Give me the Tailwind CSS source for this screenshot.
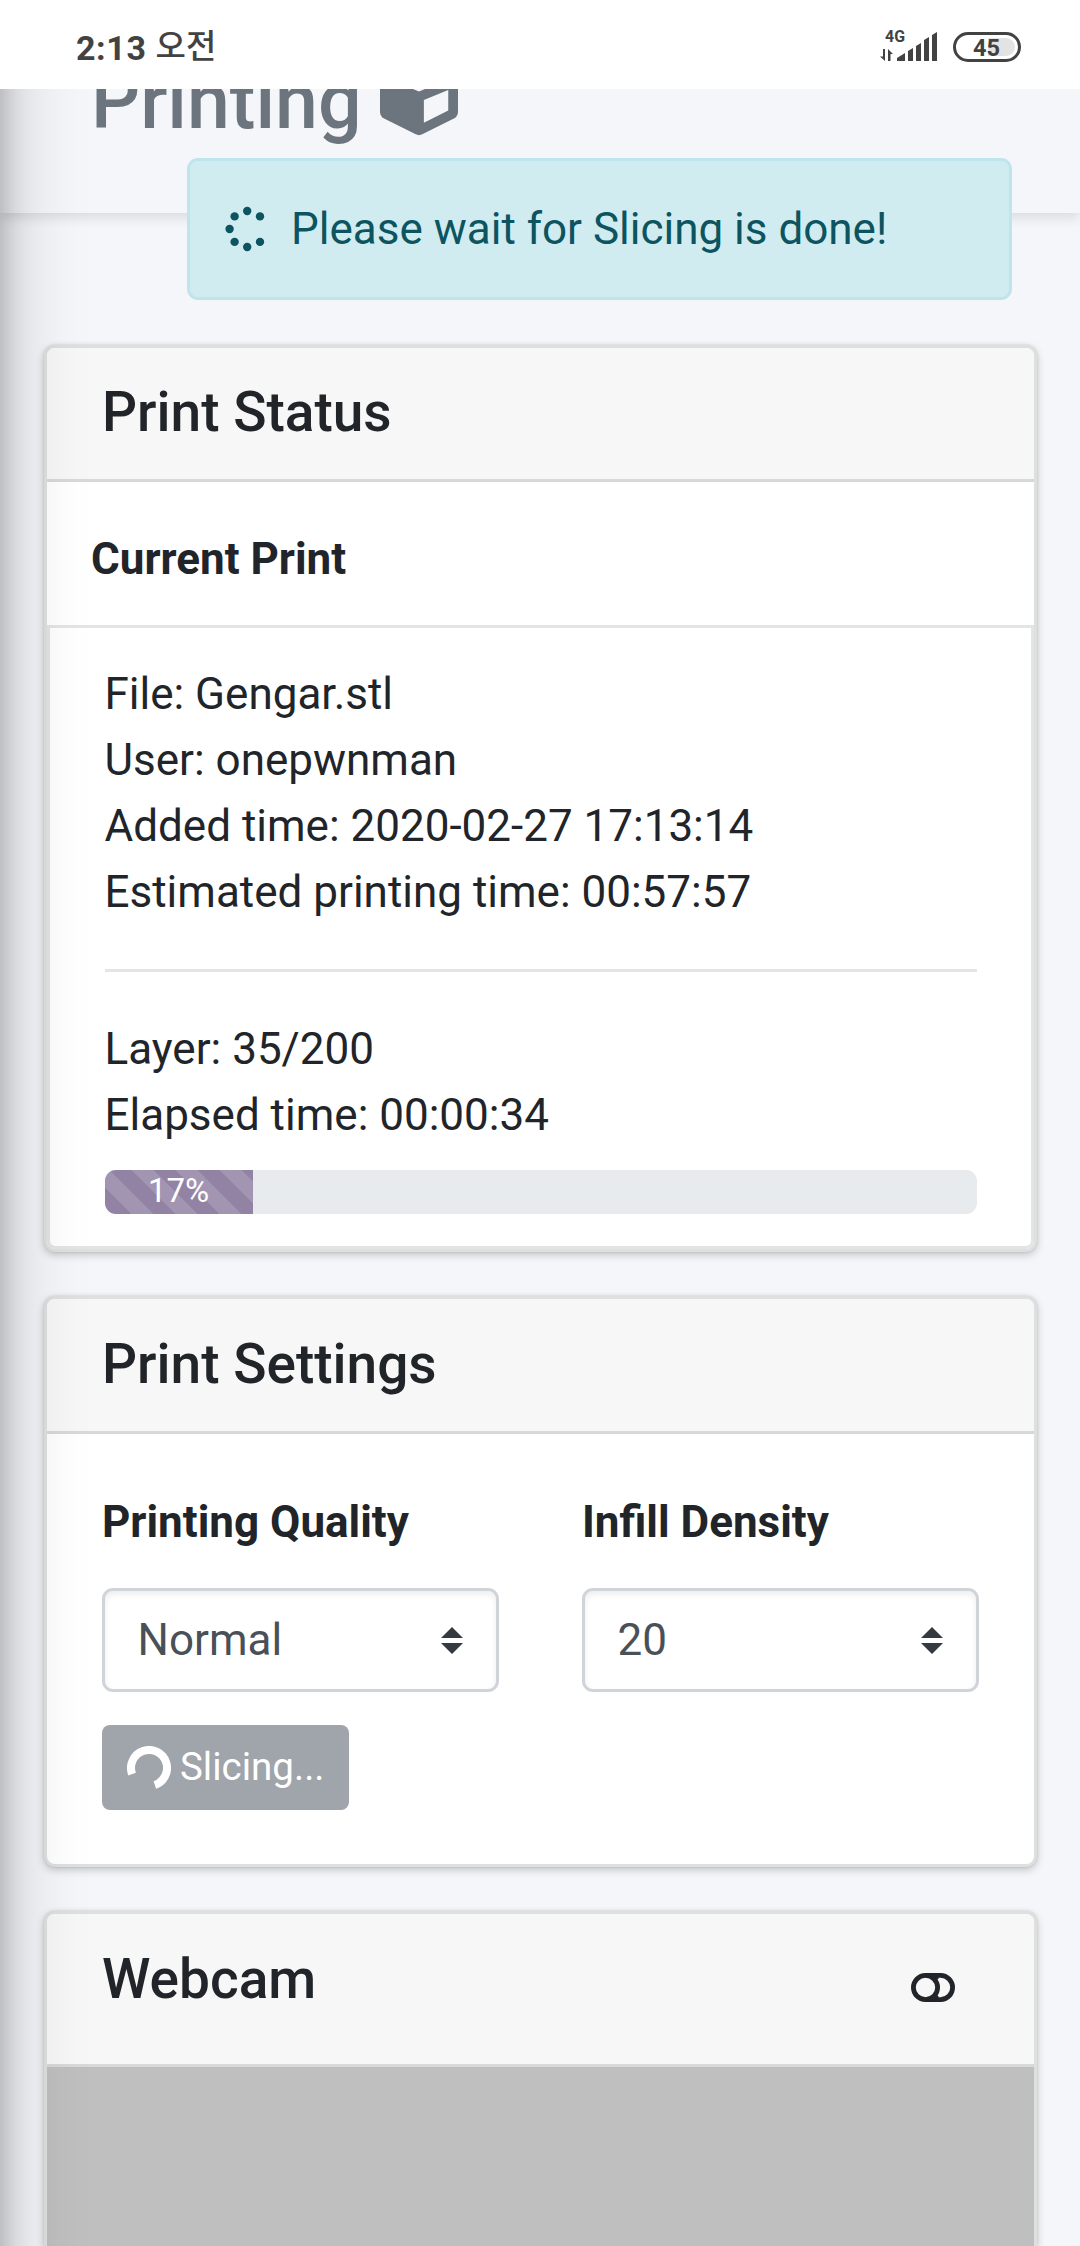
<!DOCTYPE html>
<html lang="ko">
<head>
<meta charset="utf-8">
<title>Printing</title>
<script src="https://cdn.jsdelivr.net/npm/@tailwindcss/browser@4"></script>
</head>
<body class="relative h-[2246px] w-[1080px] overflow-hidden bg-[#f4f6fa] font-['Roboto','Noto_Sans_CJK_KR',sans-serif] text-[44px] leading-[66px] text-[#212529]">

<!-- System status bar -->
<div class="relative z-30 flex h-[89px] items-start bg-white text-[#424242]">
  <div class="flex pt-[28px] pl-[76px] text-[34px] leading-[40px] font-bold whitespace-pre"><span class="tracking-[0.6px]">2:13 </span><span class="-mt-px text-[33px] font-medium">오전</span></div>
  <svg class="ml-auto h-[89px] w-[210px]" viewBox="870 0 210 89" fill="#424242">
    <text x="885" y="42" font-size="16.5" font-weight="700" textLength="20" lengthAdjust="spacingAndGlyphs">4G</text>
    <path d="M883 49h2v12l-5-4.500h3zM888 61V49l5 5h-2.500v7z"/>
    <path d="M897 61v-3l8-5v8zM908 61V51l5-3v13zM916 61V46l5-3v18zM924 61V40l5-3v24zM932 61V35l5-3v29z"/>
    <path d="M988 38h18a9 9 0 0 1 0 18h-18z" fill="#e3e3e3"/>
    <rect x="954.500" y="33.500" width="65" height="27" rx="13.500" fill="none" stroke="#424242" stroke-width="3"/>
    <text x="973" y="56" font-size="24" font-weight="700" textLength="27" lengthAdjust="spacingAndGlyphs">45</text>
  </svg>
</div>

<!-- Page header, scrolled partly under the status bar -->
<header class="flex h-[124px] items-end bg-[#f4f6fa] pb-[58px] pl-[91px] shadow-[0_5.5px_11px_rgba(0,0,0,0.1)]">
  <h1 class="flex items-end gap-[18px] text-[77px] leading-[92px] font-medium text-[#6c757d]">
    <span class="mb-[7px]">Printing</span>
    <svg class="mb-[19px] h-[78px] w-[78px]" viewBox="0 0 512 512" fill="currentColor"><path d="M239.100 6.300l-208 78c-18.700 7-31.100 25-31.100 45v225.100c0 18.200 10.300 34.800 26.500 42.900l208 104c13.500 6.800 29.400 6.800 42.900 0l208-104c16.300-8.100 26.500-24.800 26.500-42.900V129.300c0-20-12.400-37.900-31.100-44.900l-208-78C262 2.200 250 2.200 239.100 6.300zM256 68.400l192 72v1.100l-192 78-192-78v-1.100l192-72zm32 356V275.500l160-65v133.900l-160 80z"/></svg>
  </h1>
</header>

<!-- Floating alert -->
<div class="absolute top-[158px] left-[187px] z-20 flex h-[142px] w-[825px] items-center rounded-[11px] border-[3px] border-[#bee5eb] bg-[#d1ecf1] pl-[34px] text-[#0c5460]">
  <svg class="h-[46px] w-[46px]" viewBox="224 205.700 46 46" fill="currentColor">
    <circle cx="247.200" cy="210.700" r="4.200"/><circle cx="260" cy="216.100" r="4.200"/><circle cx="260" cy="241.600" r="4.200"/><circle cx="247.200" cy="246.700" r="4.200"/><circle cx="234.600" cy="241.600" r="4.200"/><circle cx="229.600" cy="228.700" r="4.200"/><circle cx="234.600" cy="216.100" r="4.200"/>
  </svg>
  <span class="ml-[21px]">Please wait for Slicing is done!</span>
</div>

<!-- Off-canvas sidebar: only its shadow reaches the page -->
<aside class="absolute -top-[150px] -left-[688px] z-10 h-[2600px] w-[688px] shadow-[0_38px_77px_rgba(0,0,0,0.25),0_27px_27px_rgba(0,0,0,0.22)]"></aside>

<main class="flex flex-col gap-[44px] pt-[132px] pr-[43px] pl-[44px]">

  <section class="h-[907px] rounded-[11px] border-[3px] border-[#dedfdf] bg-white shadow-[0_0_3px_rgba(0,0,0,0.125),0_3px_8px_rgba(0,0,0,0.2)]">
    <div class="h-[134px] rounded-t-[8px] border-b-[3px] border-[#d8d8d8] bg-[#f7f7f7] pt-[31px] pl-[55px]">
      <h2 class="text-[55px] leading-[66px] font-medium">Print Status</h2>
    </div>
    <div class="h-[143px] pt-[44px] pl-[44px] font-bold">Current Print</div>
    <div class="h-[624px] rounded-b-[8px] border-[3px] border-[#e4e4e4] pt-[33px] pr-[54px] pl-[54.500px]">
      <p>File: Gengar.stl</p>
      <p>User: onepwnman</p>
      <p>Added time: 2020-02-27 17:13:14</p>
      <p>Estimated printing time: 00:57:57</p>
      <hr class="my-[44px] border-t-[3px] border-[#e5e5e5]">
      <p>Layer: 35/200</p>
      <p>Elapsed time: 00:00:34</p>
      <div class="mt-[22px] h-[44px] overflow-hidden rounded-[11px] bg-[#e7ebee]">
        <div class="h-full bg-[#9283a5] bg-[linear-gradient(45deg,rgba(255,255,255,0.15)_25%,transparent_25%,transparent_50%,rgba(255,255,255,0.15)_50%,rgba(255,255,255,0.15)_75%,transparent_75%,transparent)] bg-[length:44px_44px] bg-[position:27px_0] text-center text-[33px] leading-[42px] text-white" style="width:17%">17%</div>
      </div>
    </div>
  </section>

  <section class="h-[571px] rounded-[11px] border-[3px] border-[#dedfdf] bg-white shadow-[0_0_3px_rgba(0,0,0,0.125),0_3px_8px_rgba(0,0,0,0.2)]">
    <div class="h-[135px] rounded-t-[8px] border-b-[3px] border-[#d8d8d8] bg-[#f7f7f7] pt-[32px] pl-[55px]">
      <h2 class="text-[55px] leading-[66px] font-medium">Print Settings</h2>
    </div>
    <div class="px-[55px] pt-[55px]">
      <div class="grid grid-cols-[397px_397px] gap-[83px]">
        <div>
          <label class="block font-bold">Printing Quality</label>
          <div class="mt-[33px] flex h-[104px] items-center justify-between rounded-[11px] border-[3px] border-[#ced4da] bg-white pr-[33px] pl-[32.500px] text-[#495057] shadow-[inset_0_3px_6px_rgba(0,0,0,0.075)]">
            <span>Normal</span>
            <svg class="-mt-px h-[28px] w-[22px]" viewBox="0 0 22 28" fill="#343a40"><path d="M0 12L11 1l11 11zM0 17h22L11 28z"/></svg>
          </div>
        </div>
        <div>
          <label class="block font-bold">Infill Density</label>
          <div class="mt-[33px] flex h-[104px] items-center justify-between rounded-[11px] border-[3px] border-[#ced4da] bg-white pr-[33px] pl-[32.500px] text-[#495057] shadow-[inset_0_3px_6px_rgba(0,0,0,0.075)]">
            <span>20</span>
            <svg class="-mt-px h-[28px] w-[22px]" viewBox="0 0 22 28" fill="#343a40"><path d="M0 12L11 1l11 11zM0 17h22L11 28z"/></svg>
          </div>
        </div>
      </div>
      <button class="mt-[33px] flex h-[85px] w-[247px] items-center rounded-[8px] bg-[#a0a4ab] pl-[25px] text-[38.500px] text-white">
        <svg class="h-[44px] w-[44px]" viewBox="-22 -22 44 44" fill="none" stroke="currentColor" stroke-width="8"><path d="M-16.900 6.160A18 18 0 1 1 5.860 17"/></svg>
        <span class="-mt-[2px] ml-[9px]">Slicing...</span>
      </button>
    </div>
  </section>

  <section class="h-[335px] rounded-t-[11px] border-x-[3px] border-t-[3px] border-[#dedfdf] bg-white shadow-[0_0_3px_rgba(0,0,0,0.125),0_3px_8px_rgba(0,0,0,0.2)]">
    <div class="flex h-[153px] items-start justify-between rounded-t-[8px] border-b-[3px] border-[#d8d8d8] bg-[#f7f7f7] pt-[32px] pr-[79px] pl-[55px]">
      <h2 class="text-[55px] leading-[66px] font-medium">Webcam</h2>
      <svg class="mt-[27px] h-[29px] w-[44px]" viewBox="0 0 44 29" fill="none" stroke="currentColor" stroke-width="4.800"><circle cx="14.500" cy="14.500" r="12.100"/><path d="M14.500 2.400h15a12.100 12.100 0 0 1 0 24.200h-15"/><path d="M22 1.500l5 4.500M22 27.500l5-4.500" stroke-width="3"/></svg>
    </div>
    <div class="h-[179px] bg-[#bfbfbf]"></div>
  </section>
</main>
</body>
</html>
